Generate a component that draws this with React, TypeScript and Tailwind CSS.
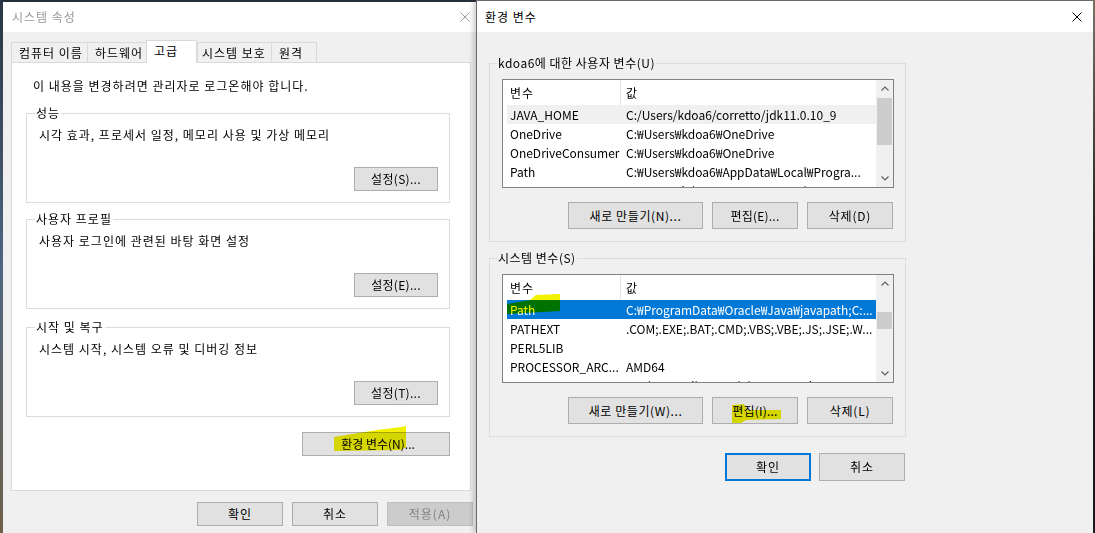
import type { ReactNode } from 'react';

type Row = { name: string; value: string; sel?: 'grey' | 'blue' };

const TABS = [
  { label: '컴퓨터 이름', cls: 'w-[76px] pl-[7px]' },
  { label: '하드웨어', cls: 'w-[59px] pl-[7px]' },
  { label: '고급', cls: 'w-[51px] pl-[7px]', active: true },
  { label: '시스템 보호', cls: 'w-[74px] pl-[4px]' },
  { label: '원격', cls: 'w-[46px] pl-[7px] border-r' },
];

const USER_VARS: Row[] = [
  { name: 'JAVA_HOME', value: 'C:/Users/kdoa6/corretto/jdk11.0.10_9', sel: 'grey' },
  { name: 'OneDrive', value: 'C:₩Users₩kdoa6₩OneDrive' },
  { name: 'OneDriveConsumer', value: 'C:₩Users₩kdoa6₩OneDrive' },
  { name: 'Path', value: 'C:₩Users₩kdoa6₩AppData₩Local₩Progra...' },
  { name: 'TEMP', value: 'C:₩Users₩kdoa6₩AppData₩Local₩Temp' },
];

const SYSTEM_VARS: Row[] = [
  { name: 'Path', value: 'C:₩ProgramData₩Oracle₩Java₩javapath;C:...', sel: 'blue' },
  { name: 'PATHEXT', value: '.COM;.EXE;.BAT;.CMD;.VBS;.VBE;.JS;.JSE;.W...' },
  { name: 'PERL5LIB', value: '' },
  { name: 'PROCESSOR_ARC...', value: 'AMD64' },
  { name: 'PROCESSOR_IDE...', value: 'Intel64 Family 6 Model 158 Stepping 10, ...' },
];

function CloseIcon({ className }: { className: string }) {
  return (
    <svg width="10" height="10" viewBox="0 0 10 10" className={className}>
      <path d="M0.5 0.5 L9.5 9.5 M9.5 0.5 L0.5 9.5" stroke="currentColor" strokeWidth="1" fill="none" />
    </svg>
  );
}

function Chevron({ down = false }: { down?: boolean }) {
  return (
    <svg width="8" height="5" viewBox="0 0 8 5" className="text-[#606060]">
      <path
        d={down ? 'M0.5 0.5 L4 4 L7.5 0.5' : 'M0.5 4.5 L4 1 L7.5 4.5'}
        stroke="currentColor"
        strokeWidth="1.2"
        fill="none"
      />
    </svg>
  );
}

// yellow highlighter stroke drawn over the screenshot
function Marker({ className, w, h, points }: { className: string; w: number; h: number; points: string }) {
  return (
    <svg
      width={w}
      height={h}
      viewBox={`0 0 ${w} ${h}`}
      className={`pointer-events-none absolute mix-blend-multiply ${className}`}
    >
      <polygon points={points} fill="#f2f200" />
    </svg>
  );
}

function Btn({
  children,
  className = '',
  variant = 'normal',
}: {
  children: ReactNode;
  className?: string;
  variant?: 'normal' | 'default' | 'disabled';
}) {
  const look =
    variant === 'default'
      ? 'border-2 border-[#0078d7] bg-[#e1e1e1]'
      : variant === 'disabled'
        ? 'border border-[#bfbfbf] bg-[#cccccc] text-[#838383]'
        : 'border border-[#adadad] bg-[#e1e1e1]';
  return (
    <div className={`relative flex shrink-0 items-center justify-center whitespace-nowrap ${look} ${className}`}>
      {children}
    </div>
  );
}

function LeftGroup({ title, desc, button, className = '' }: { title: string; desc: string; button: string; className?: string }) {
  return (
    <div className={`relative flex h-[90px] w-[424px] flex-col border border-[#dcdcdc] ${className}`}>
      <span className="absolute -top-[9px] left-[8px] bg-white px-[1px] tracking-[1px]">{title}</span>
      <p className="pl-[12px] pt-[13px] tracking-[1px]">{desc}</p>
      <Btn className="mb-[11px] mr-[11px] mt-auto h-[24px] w-[84px] self-end tracking-[0.3px]">{button}</Btn>
    </div>
  );
}

function Scrollbar({ thumb }: { thumb: string }) {
  return (
    <div className="flex w-[17px] shrink-0 flex-col bg-[#f0f0f0]">
      <div className="flex h-[17px] shrink-0 items-center justify-center">
        <Chevron />
      </div>
      <div className="flex-1">
        <div className={`mx-px bg-[#cdcdcd] ${thumb}`} />
      </div>
      <div className="flex h-[17px] shrink-0 items-center justify-center">
        <Chevron down />
      </div>
    </div>
  );
}

function VarList({ rows, thumb, children }: { rows: Row[]; thumb: string; children?: ReactNode }) {
  return (
    <div className="relative ml-[12px] flex h-[109px] w-[392px] border border-[#828282] bg-white">
      <div className="flex w-[373px] flex-col overflow-hidden pl-[4px]">
        <div className="flex h-[25px] shrink-0 items-center tracking-[1px]">
          <div className="w-[113px] pl-[3px]">변수</div>
          <div className="h-full w-px bg-[#e5e5e5]" />
          <div className="pl-[5px]">값</div>
        </div>
        {rows.map((r) => (
          <div
            key={r.name}
            className={`flex h-[19px] shrink-0 items-center whitespace-nowrap ${
              r.sel === 'blue' ? 'bg-[#0078d7] text-white' : r.sel === 'grey' ? 'bg-[#f0f0f0]' : ''
            }`}
          >
            <div className="w-[113px] shrink-0 overflow-hidden pl-[3px]">{r.name}</div>
            <div className="w-[256px] shrink-0 overflow-hidden pl-[6px]">{r.value}</div>
          </div>
        ))}
      </div>
      <Scrollbar thumb={thumb} />
      {children}
    </div>
  );
}

function VarGroup({
  title,
  rows,
  thumb,
  buttons,
  className = '',
  listExtra,
}: {
  title: string;
  rows: Row[];
  thumb: string;
  buttons: ReactNode;
  className?: string;
  listExtra?: ReactNode;
}) {
  return (
    <div className={`relative w-[417px] border border-[#dcdcdc] pb-[12px] pt-[15px] ${className}`}>
      <span className="absolute -top-[9px] left-[7px] bg-[#f0f0f0] px-[1px] tracking-[0.5px]">{title}</span>
      <VarList rows={rows} thumb={thumb}>
        {listExtra}
      </VarList>
      <div className="mt-[14px] flex justify-end gap-[9px] pr-[12px]">{buttons}</div>
    </div>
  );
}

export default function App() {
  return (
    <div className="flex h-[533px] w-[1095px] overflow-hidden bg-[#26303b] font-['Noto_Sans_CJK_KR',sans-serif] text-[12px] leading-[16px] text-black">
      {/* desktop edge */}
      <div className="w-[3px] shrink-0 bg-gradient-to-b from-[#2a3644] via-[#4d6580] to-[#6e6048]" />

      {/* 시스템 속성 */}
      <div className="mt-[2px] flex h-[531px] w-[473px] shrink-0 flex-col overflow-hidden bg-[#f0f0f0]">
        <div className="flex h-[30px] shrink-0 items-center justify-between bg-white pl-[9px] pr-[6px]">
          <span className="tracking-[1px] text-[#999999]">시스템 속성</span>
          <CloseIcon className="text-[#9a9a9a]" />
        </div>

        <div className="mt-[8px] flex h-[22px] shrink-0 items-end pl-[8px] tracking-[1px]">
          {TABS.map((t) =>
            t.active ? (
              <div
                key={t.label}
                className={`relative z-10 -mb-px flex h-[23px] items-center border-x border-t border-[#d9d9d9] bg-white pb-[2px] ${t.cls}`}
              >
                {t.label}
              </div>
            ) : (
              <div
                key={t.label}
                className={`flex h-[20px] items-center border-l border-t border-[#d9d9d9] bg-[#f0f0f0] ${t.cls}`}
              >
                {t.label}
              </div>
            ),
          )}
        </div>

        <div className="ml-[8px] flex h-[429px] w-[460px] shrink-0 flex-col border border-[#d9d9d9] bg-white pl-[14px]">
          <p className="ml-[7px] pt-[15px] tracking-[1px]">이 내용을 변경하려면 관리자로 로그온해야 합니다.</p>
          <LeftGroup className="mt-[19px]" title="성능" desc="시각 효과, 프로세서 일정, 메모리 사용 및 가상 메모리" button="설정(S)..." />
          <LeftGroup className="mt-[16px]" title="사용자 프로필" desc="사용자 로그인에 관련된 바탕 화면 설정" button="설정(E)..." />
          <LeftGroup className="mt-[18px]" title="시작 및 복구" desc="시스템 시작, 시스템 오류 및 디버깅 정보" button="설정(T)..." />
          <div className="mt-[15px] flex w-[424px] justify-end">
            <Btn className="h-[24px] w-[148px] pl-[4px]">
              환경 변수(N)...
              <Marker className="left-[31px] -top-[7px]" w={72} h={26} points="0,11 43,4 67,1 72,0 72,21 67,24 0,25" />
            </Btn>
          </div>
        </div>

        <div className="mt-[11px] flex justify-end gap-[9px] pr-[3px] tracking-[1px]">
          <Btn className="h-[24px] w-[86px]">확인</Btn>
          <Btn className="h-[24px] w-[86px]">취소</Btn>
          <Btn className="h-[24px] w-[86px]" variant="disabled">
            적용(A)
          </Btn>
        </div>
      </div>

      {/* 환경 변수 */}
      <div className="relative z-10 flex h-[533px] w-[617px] shrink-0 flex-col border-l border-t border-[#6a6a6a] bg-[#f0f0f0] shadow-[-3px_0_5px_rgba(0,0,0,0.18)]">
        <div className="flex h-[31px] shrink-0 items-center justify-between bg-white pl-[8px] pr-[11px]">
          <span className="tracking-[1px]">환경 변수</span>
          <CloseIcon className="text-black" />
        </div>

        <div className="flex flex-col pl-[12px]">
          <VarGroup
            className="mt-[31px]"
            title="kdoa6에 대한 사용자 변수(U)"
            rows={USER_VARS}
            thumb="mt-[1px] h-[47px]"
            buttons={
              <>
                <Btn className="h-[27px] w-[135px] tracking-[0.6px]">새로 만들기(N)...</Btn>
                <Btn className="h-[27px] w-[86px] tracking-[0.2px]">편집(E)...</Btn>
                <Btn className="h-[27px] w-[86px] tracking-[0.8px]">삭제(D)</Btn>
              </>
            }
          />
          <VarGroup
            className="mt-[16px]"
            title="시스템 변수(S)"
            rows={SYSTEM_VARS}
            thumb="mt-[20px] h-[17px]"
            listExtra={
              <Marker className="left-[4px] top-[19px]" w={53} h={20} points="0,10 23,6 29,1 53,0 53,17 0,20" />
            }
            buttons={
              <>
                <Btn className="h-[27px] w-[135px] tracking-[0.6px]">새로 만들기(W)...</Btn>
                <Btn className="h-[27px] w-[86px] tracking-[0.2px]">
                  편집(I)...
                  <Marker className="left-[19px] top-[6px]" w={49} h={19} points="0,1 12,0 15,6 49,6 49,15 14,16 9,19 0,19" />
                </Btn>
                <Btn className="h-[27px] w-[86px] tracking-[0.8px]">삭제(L)</Btn>
              </>
            }
          />
          <div className="mt-[16px] flex w-[417px] justify-end gap-[8px] pr-px tracking-[1px]">
            <Btn className="h-[28px] w-[86px]" variant="default">
              확인
            </Btn>
            <Btn className="h-[28px] w-[86px]">취소</Btn>
          </div>
        </div>
      </div>

      {/* desktop edge */}
      <div className="w-[2px] shrink-0 bg-gradient-to-b from-[#7b7466] via-[#1c1c1c] to-[#1c1c1c]" />
    </div>
  );
}
